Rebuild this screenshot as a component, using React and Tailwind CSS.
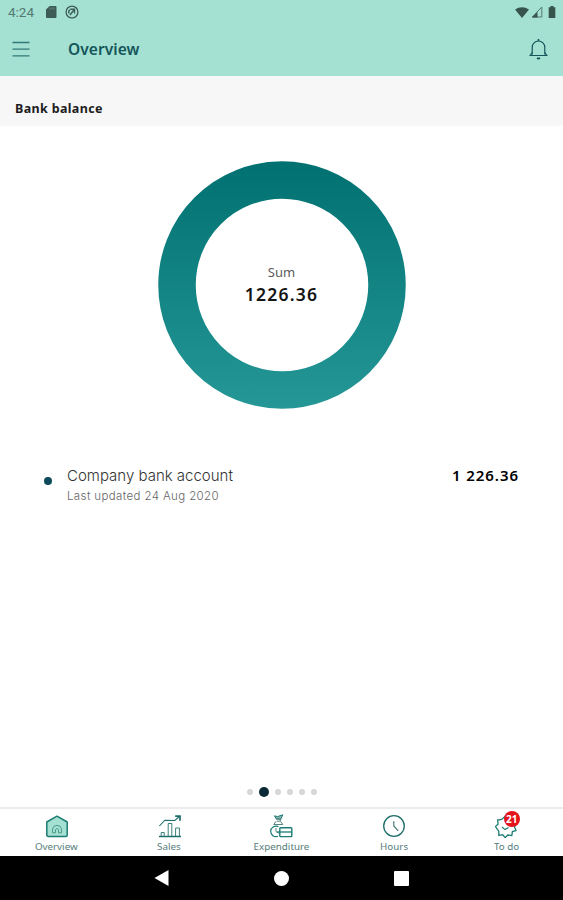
import React from 'react';

const tabs = [
  { label: 'Overview', icon: HomeIcon },
  { label: 'Sales', icon: SalesIcon },
  { label: 'Expenditure', icon: ExpenditureIcon },
  { label: 'Hours', icon: HoursIcon },
  { label: 'To do', icon: TodoIcon, badge: 21 },
];

const pages = [0, 1, 2, 3, 4, 5];
const activePage = 1;

function HomeIcon() {
  return (
    <svg className="ml-px" width="24" height="24" viewBox="0 0 24 24" fill="none" stroke="#1c7c74">
      <path d="M1.8 8L12 2.200l10.200 5.800v13a1.500 1.500 0 0 1-1.500 1.500H3.300A1.500 1.500 0 0 1 1.800 21z" fill="#a5e1d2" strokeWidth="1.500" strokeLinejoin="round" />
      <path d="M7.500 18.800v-3.800a4.600 4.600 0 0 1 9 0v3.800h-3v-3.200a1.600 1.600 0 0 0-3 0v3.200z" stroke="#4b9a8e" strokeWidth="1" />
    </svg>
  );
}

function SalesIcon() {
  return (
    <svg className="ml-[2px]" width="24" height="24" viewBox="0 0 24 24" fill="none" stroke="#1c6e6a">
      <path d="M1 22.500h22" strokeWidth="1.500" />
      <path d="M3.200 22v-3.500h3V22M10.200 22V9.500h3.600V22M17.600 22v-8h3.800V22" stroke="#3b7f7b" strokeWidth="1" />
      <path d="M1.400 12L6.800 6.200l10 .300L21.500 2.500" strokeWidth="1.100" />
      <path d="M17.200 2.200h4.800v4.600" strokeWidth="1.700" />
    </svg>
  );
}

function ExpenditureIcon() {
  return (
    <svg width="24" height="24" viewBox="0 0 24 24" fill="none" stroke="#1c7c74" strokeWidth="1">
      <path d="M5.500 1.800l3 .800 5.300-1.800-2 4.200H7.400z" fill="#8fb5b0" />
      <path d="M7 5.200h5l-1 2H8M7.200 7.200L4.800 10.500h9l-2.400-3.300" stroke="#57837f" />
      <path d="M9.500 12.600c-4-1.400-7.800 1-7.800 4.700s3.300 6.200 7.300 5" strokeWidth="1.200" />
      <path d="M7 14v3.600l2.500 1.600" stroke="#57837f" />
      <rect x="10.800" y="13.800" width="12" height="8.800" rx="0.800" strokeWidth="1.400" />
      <path d="M8 18H23" strokeWidth="1.300" />
    </svg>
  );
}

function HoursIcon() {
  return (
    <svg width="24" height="24" viewBox="0 0 24 24" fill="none" stroke="#1c6e6a">
      <circle cx="12" cy="12" r="10.300" strokeWidth="1.300" />
      <path d="M11.800 7.200v4.800l4.500 4.800" strokeWidth="1.200" stroke="#4b7b79" />
    </svg>
  );
}

function TodoIcon() {
  return (
    <svg width="24" height="24" viewBox="0 0 24 24" fill="none" stroke="#1c7c74">
      <path
        d="M10.500 2l2.800 2.500 4-.5.400 4 3.300 1.500-1.500 3.500 1.500 3.600-3.600 1-.600 4-4-.600-2.600 2.600-2.600-2.900-3.700.700-.200-4.200L.500 12.600l2.600-2.600-.500-4 4-.600z"
        strokeWidth="1.300"
      />
      <path d="M7 13l3 2.600 3.500-2.200" strokeWidth="1.200" />
    </svg>
  );
}

function StatusBar() {
  return (
    <div className="flex h-6 items-center justify-between pl-2 pr-[7px] text-[#527a71]">
      <div className="flex items-center">
        <span className="w-[27px] whitespace-nowrap font-['Roboto',sans-serif] text-[13.500px] leading-6">4:24</span>
        <svg className="ml-[11px]" width="11" height="12" viewBox="0 0 11 12" fill="#3c5c55">
          <path d="M3.600 0H9.500a1 1 0 0 1 1 1v10a1 1 0 0 1-1 1H1a1 1 0 0 1-1-1V3.600z" />
          <path d="M4 1.500v2M6 1.500v2M8 1.500v2" stroke="#6f978c" strokeWidth="0.800" />
        </svg>
        <svg className="ml-2" width="14" height="14" viewBox="0 0 14 14" fill="none" stroke="#3c5c55">
          <circle cx="7" cy="7" r="5.900" strokeWidth="1.300" />
          <path d="M4.200 8.500a3 3 0 0 1 .600-3.700M5.200 4.200h4.300v4.200M9.300 4.400L5 10" strokeWidth="1.400" />
        </svg>
      </div>
      <div className="flex items-center">
        <svg width="14" height="11" viewBox="0 0 14 11" fill="#36534c">
          <path d="M0 2.600C4-.700 10-.700 14 2.600L7 11z" />
        </svg>
        <svg className="ml-[2px]" width="12" height="12" viewBox="0 0 12 12">
          <path d="M1.200 11L10.800 1v10z" fill="none" stroke="#54786f" strokeWidth="1" />
          <path d="M1 11.500l5.500-5.600v5.600z" fill="#36534c" />
        </svg>
        <svg className="ml-[5px]" width="8" height="12" viewBox="0 0 8 12" fill="#36534c">
          <path d="M2.500 0h3v1.300H7.300V12H.7V1.300h1.800z" />
        </svg>
      </div>
    </div>
  );
}

function AppBar() {
  return (
    <div className="flex h-[52px] items-center pb-[2px] pl-3 pr-[15px]">
      <svg width="18" height="16" viewBox="0 0 18 16" stroke="#337a78" strokeWidth="1.300">
        <path d="M.5 1.500h17M.5 8.200h17M.5 14.900h17" />
      </svg>
      <h1 className="ml-[38px] flex-1 text-[15.500px] font-semibold leading-6 tracking-[0.050px] text-[#14555a]">Overview</h1>
      <svg width="19" height="22" viewBox="0 0 19 22" fill="none" stroke="#14555a">
        <path d="M3.200 16.500V9.300a6.300 6.300 0 0 1 12.600 0v7.200" strokeWidth="1.200" />
        <path d="M3.200 14.500l-2 3h16.600l-2-3" strokeWidth="1.200" />
        <path d="M9.500 3V1M8 20a2 1.400 0 0 0 3 0" strokeWidth="1.600" />
      </svg>
    </div>
  );
}

function BalanceChart() {
  return (
    <div className="mt-[34px] grid place-items-center">
      <svg className="col-start-1 row-start-1" width="250" height="250" viewBox="0 0 250 250">
        <defs>
          <linearGradient id="ring" x1="0" y1="0" x2="0" y2="250" gradientUnits="userSpaceOnUse">
            <stop offset="0" stopColor="#007070" />
            <stop offset="1" stopColor="#269797" />
          </linearGradient>
        </defs>
        <circle cx="125" cy="125" r="105" fill="none" stroke="url(#ring)" strokeWidth="37.500" />
      </svg>
      <div className="col-start-1 row-start-1 flex flex-col items-center pb-[3px]">
        <span className="text-[13px] leading-5 text-[#5c5c5c]">Sum</span>
        <span className="text-[17.500px] font-semibold leading-6 tracking-[1.200px] text-[#141414]">1226.36</span>
      </div>
    </div>
  );
}

function AccountRow() {
  return (
    <div className="mt-[54px] flex items-start pl-11 pr-[44px]">
      <span className="mt-[13px] h-2 w-2 rounded-full bg-[#0d4a5c]" />
      <div className="ml-[15px] mt-px flex flex-1 flex-col">
        <span className="font-['Inter',sans-serif] text-[15px] font-light leading-[22px] text-[#333]">Company bank account</span>
        <span className="font-['Inter',sans-serif] text-[11.500px] font-light leading-[18px] tracking-[0.380px] text-[#666]">Last updated 24 Aug 2020</span>
      </div>
      <span className="text-[15px] font-semibold leading-[22px] tracking-[0.950px] text-black">1 226.36</span>
    </div>
  );
}

function TabBar() {
  return (
    <nav className="grid h-[49px] grid-cols-5 border-t-2 border-[#ececec] bg-white">
      {tabs.map(({ label, icon: Icon, badge }) => (
        <button key={label} className="flex flex-col items-center pt-[5px]">
          <span className="relative">
            <Icon />
            {badge && (
              <span className="absolute -right-[1px] -top-[3px] flex h-4 w-4 items-center justify-center rounded-full bg-[#e3141b] text-[10px] font-bold leading-none text-white">
                {badge}
              </span>
            )}
          </span>
          <span className="pt-px text-[9.800px] leading-[16px] text-[#557d79]">{label}</span>
        </button>
      ))}
    </nav>
  );
}

function SystemBar() {
  return (
    <div className="flex h-[44px] items-center bg-black pl-[154px]">
      <svg width="15" height="16" viewBox="0 0 15 16" fill="#fff">
        <path d="M14.500 0v16L.5 8z" />
      </svg>
      <span className="ml-[105px] h-[15px] w-[15px] rounded-full bg-white" />
      <span className="ml-[105px] h-[15px] w-[15px] rounded-[1px] bg-white" />
    </div>
  );
}

function App() {
  return (
    <div className="flex h-[900px] w-[563px] flex-col overflow-hidden bg-white font-['Noto_Sans',sans-serif]">
      <header className="h-[76px] bg-[#a5e1d2]">
        <StatusBar />
        <AppBar />
      </header>

      <div className="h-[50px] bg-[#f7f7f7] pl-[15px] pt-[23px]">
        <h2 className="text-[12.500px] font-bold leading-5 tracking-[0.350px] text-[#1c1c1c]">Bank balance</h2>
      </div>

      <main className="flex flex-1 flex-col">
        <BalanceChart />
        <AccountRow />

        {/* Page dots */}
        <div className="mb-[10px] mt-auto flex items-center justify-center gap-[6px]">
          {pages.map((page) => (
            <span
              key={page}
              className={page === activePage ? 'h-[10px] w-[10px] rounded-full bg-[#0c2a36]' : 'h-[6px] w-[6px] rounded-full bg-[#d6d6d6]'}
            />
          ))}
        </div>
      </main>

      <TabBar />
      <SystemBar />
    </div>
  );
}

export default App;
